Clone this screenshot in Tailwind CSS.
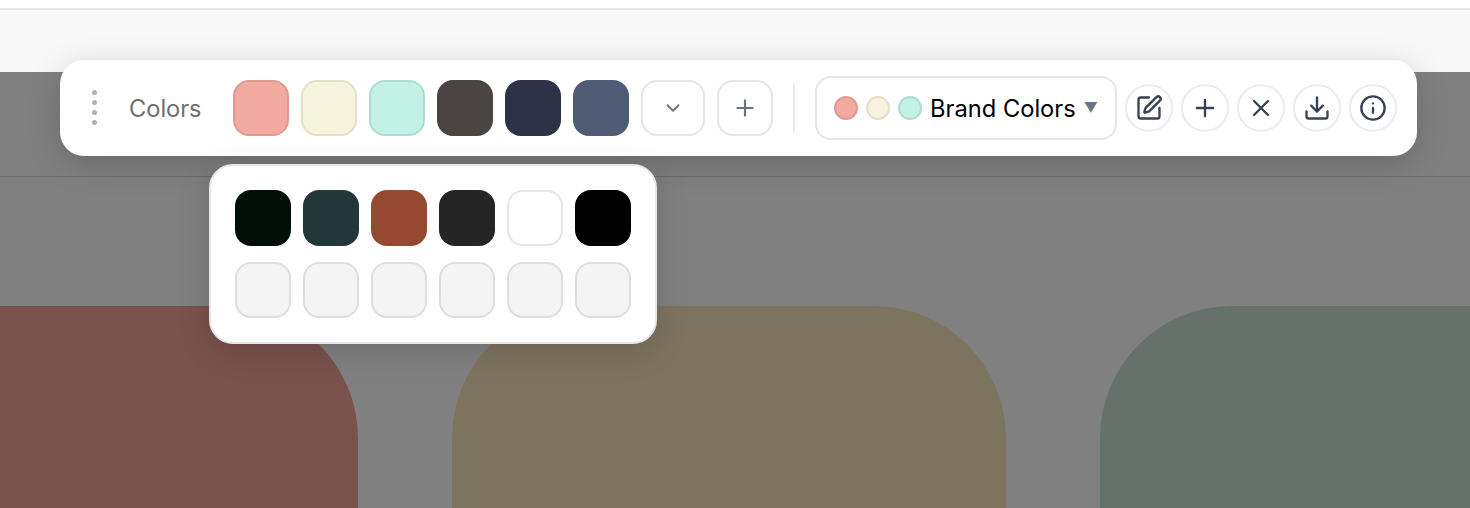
<!DOCTYPE html>
<html lang="en">
<head>
    <meta charset="UTF-8">
    <meta name="viewport" content="width=device-width, initial-scale=1.0">
    <title>Colors</title>
    <script src="https://cdn.jsdelivr.net/npm/@tailwindcss/browser@4"></script>
</head>
<body class="bg-white font-['Inter',sans-serif]">
    <div class="relative h-[508px] w-full overflow-hidden">
        <!-- top strip -->
        <div class="h-2 bg-white"></div>
        <div class="h-[64px] border-t-2 border-[#e8e8e8] bg-[#f8f8f8]"></div>

        <!-- dimmed page -->
        <div class="h-[436px] bg-[#808080]">
            <div class="h-[105px] border-b border-[#6c6c6c]"></div>
            <div class="ml-[-196px] flex gap-[94px] pt-[129px]">
                <div class="h-[300px] w-[554px] shrink-0 rounded-t-[132px] bg-[#7a524d]"></div>
                <div class="h-[300px] w-[554px] shrink-0 rounded-t-[132px] bg-[#7d745f]"></div>
                <div class="h-[300px] w-[554px] shrink-0 rounded-t-[132px] bg-[#66716c]"></div>
            </div>
        </div>

        <!-- toolbar -->
        <div class="absolute left-[60px] top-[60px] flex h-[96px] w-[1357px] items-center rounded-[24px] bg-white pl-[32px] shadow-[0_8px_32px_rgba(0,0,0,0.18)]">
            <div class="mb-0.5 flex w-[5px] flex-col gap-[5px]">
                <span class="size-[5px] rounded-full bg-[#b0b0b0]"></span>
                <span class="size-[5px] rounded-full bg-[#b0b0b0]"></span>
                <span class="size-[5px] rounded-full bg-[#b0b0b0]"></span>
                <span class="size-[5px] rounded-full bg-[#b0b0b0]"></span>
            </div>
            <span class="ml-[32px] mt-0.5 w-[72px] text-[23.6px] leading-none whitespace-nowrap text-[#6f6f6f]">Colors</span>
            <div class="ml-[32px] flex gap-3">
                <button class="size-14 rounded-2xl border-2 border-[#df9a90] bg-[#f2aaa0]"></button>
                <button class="size-14 rounded-2xl border-2 border-[#e5dfc8] bg-[#f8f3df]"></button>
                <button class="size-14 rounded-2xl border-2 border-[#afdcd0] bg-[#c4f1e5]"></button>
                <button class="size-14 rounded-2xl bg-[#4a4543]"></button>
                <button class="size-14 rounded-2xl bg-[#2e3247]"></button>
                <button class="size-14 rounded-2xl bg-[#505b75]"></button>
                <button class="flex h-14 w-16 items-center justify-center rounded-2xl border-2 border-[#e5e5e5] text-[#6b7280]">
                    <svg class="size-[22px]" viewBox="0 0 24 24" fill="none" stroke="currentColor" stroke-width="2" stroke-linecap="round" stroke-linejoin="round"><path d="m6 9 6 6 6-6"/></svg>
                </button>
                <button class="flex size-14 items-center justify-center rounded-2xl border-2 border-[#e5e5e5] text-[#6b7280]">
                    <svg class="size-[26px]" viewBox="0 0 24 24" fill="none" stroke="currentColor" stroke-width="2" stroke-linecap="round" stroke-linejoin="round"><path d="M5 12h14M12 5v14"/></svg>
                </button>
            </div>
            <div class="ml-5 h-12 w-0.5 bg-[#e8e8e8]"></div>
            <div class="ml-5 flex h-16 w-[302px] items-center rounded-2xl border-2 border-[#e5e5e5] pl-[17px]">
                <span class="size-6 rounded-full border-2 border-[#df9a90] bg-[#f2aaa0]"></span>
                <span class="ml-2 size-6 rounded-full border-2 border-[#e5dfc8] bg-[#f8f3df]"></span>
                <span class="ml-2 size-6 rounded-full border-2 border-[#afdcd0] bg-[#c4f1e5]"></span>
                <span class="ml-2 mt-0.5 text-[23.7px] leading-none whitespace-nowrap text-black">Brand Colors</span>
                <span class="ml-2 text-sm leading-none text-[#6b7280]">▼</span>
            </div>
            <div class="ml-2 flex gap-2 text-[#374151]">
                <button class="flex size-12 items-center justify-center rounded-full border-2 border-[#ececec]">
                    <svg class="size-7" viewBox="0 0 24 24" fill="none" stroke="currentColor" stroke-width="2" stroke-linecap="round" stroke-linejoin="round"><path d="M12 3H5a2 2 0 0 0-2 2v14a2 2 0 0 0 2 2h14a2 2 0 0 0 2-2v-7"/><path d="M18.375 2.625a1 1 0 0 1 3 3l-9.013 9.014a2 2 0 0 1-.853.505l-2.873.84a.5.5 0 0 1-.62-.62l.84-2.873a2 2 0 0 1 .506-.852z"/></svg>
                </button>
                <button class="flex size-12 items-center justify-center rounded-full border-2 border-[#ececec]">
                    <svg class="size-7" viewBox="0 0 24 24" fill="none" stroke="currentColor" stroke-width="2" stroke-linecap="round" stroke-linejoin="round"><path d="M5 12h14M12 5v14"/></svg>
                </button>
                <button class="flex size-12 items-center justify-center rounded-full border-2 border-[#ececec]">
                    <svg class="size-7" viewBox="0 0 24 24" fill="none" stroke="currentColor" stroke-width="2" stroke-linecap="round" stroke-linejoin="round"><path d="M18 6 6 18M6 6l12 12"/></svg>
                </button>
                <button class="flex size-12 items-center justify-center rounded-full border-2 border-[#ececec]">
                    <svg class="size-7" viewBox="0 0 24 24" fill="none" stroke="currentColor" stroke-width="2" stroke-linecap="round" stroke-linejoin="round"><path d="M21 15v4a2 2 0 0 1-2 2H5a2 2 0 0 1-2-2v-4"/><path d="m7 10 5 5 5-5"/><path d="M12 15V3"/></svg>
                </button>
                <button class="flex size-12 items-center justify-center rounded-full border-2 border-[#ececec]">
                    <svg class="size-7" viewBox="0 0 24 24" fill="none" stroke="currentColor" stroke-width="2" stroke-linecap="round" stroke-linejoin="round"><circle cx="12" cy="12" r="10"/><path d="M12 16v-4M12 8h.01"/></svg>
                </button>
            </div>
        </div>

        <!-- more colors popover -->
        <div class="absolute left-[209px] top-[164px] grid h-[180px] w-[448px] grid-cols-[repeat(6,56px)] content-start gap-x-3 gap-y-4 rounded-[24px] border-2 border-[#e8e8e8] bg-white pl-6 pt-6 shadow-[0_8px_32px_rgba(0,0,0,0.15)]">
            <button class="size-14 rounded-2xl bg-[#020f09]"></button>
            <button class="size-14 rounded-2xl bg-[#23363a]"></button>
            <button class="size-14 rounded-2xl bg-[#964931]"></button>
            <button class="size-14 rounded-2xl bg-[#252525]"></button>
            <button class="size-14 rounded-2xl border-2 border-[#e5e5e5] bg-white"></button>
            <button class="size-14 rounded-2xl bg-black"></button>
            <button class="size-14 rounded-2xl border-2 border-[#dedede] bg-[#f4f4f4]"></button>
            <button class="size-14 rounded-2xl border-2 border-[#dedede] bg-[#f4f4f4]"></button>
            <button class="size-14 rounded-2xl border-2 border-[#dedede] bg-[#f4f4f4]"></button>
            <button class="size-14 rounded-2xl border-2 border-[#dedede] bg-[#f4f4f4]"></button>
            <button class="size-14 rounded-2xl border-2 border-[#dedede] bg-[#f4f4f4]"></button>
            <button class="size-14 rounded-2xl border-2 border-[#dedede] bg-[#f4f4f4]"></button>
        </div>
    </div>
</body>
</html>
